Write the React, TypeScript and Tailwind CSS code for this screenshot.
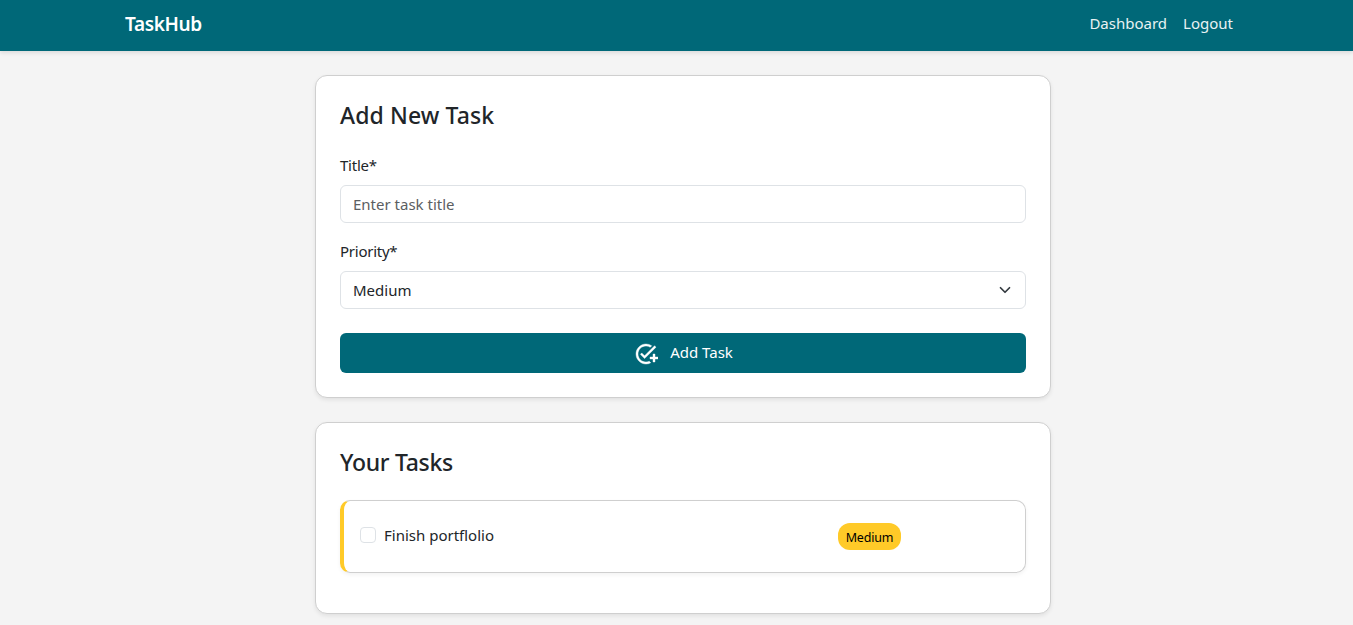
import { useState } from 'react';

function Navbar() {
  return (
    <nav className="flex h-[51px] items-center justify-between bg-[#006878] pr-[120px] pl-[125px] text-white shadow-[0_2px_4px_rgba(0,0,0,0.1)]">
      <a href="#" className="-mt-[3px] text-[19px] leading-7 font-semibold tracking-[-0.35px]">TaskHub</a>
      <div className="-mt-[5px] flex gap-4 text-[15px] leading-6 text-[#e8f2f3]">
        <a href="#">Dashboard</a>
        <a href="#">Logout</a>
      </div>
    </nav>
  );
}

function AddTaskIcon() {
  return (
    <svg viewBox="0 0 24 24" className="mt-0.5 size-6" fill="currentColor" stroke="currentColor" strokeWidth="0.4">
      <path d="M22 5.18 10.59 16.6l-4.24-4.24 1.41-1.41 2.83 2.83 10-10L22 5.18zM12 20c-4.41 0-8-3.59-8-8s3.59-8 8-8c1.57 0 3.04.46 4.28 1.25l1.45-1.45A10.02 10.02 0 0 0 12 2C6.48 2 2 6.48 2 12s4.48 10 10 10c1.73 0 3.36-.44 4.78-1.22l-1.5-1.5c-1 .46-2.11.72-3.28.72zm7-5h-3v2h3v3h2v-3h3v-2h-3v-3h-2v3z" />
    </svg>
  );
}

function AddTaskCard() {
  const [title, setTitle] = useState('');
  return (
    <section className="h-[323px] w-[736px] rounded-[12px] border border-[#cfcfcf] bg-white px-6 pt-[25px] shadow-[0_2px_4px_rgba(0,0,0,0.08)]">
      <h2 className="text-[23px] leading-[29px] font-medium tracking-[0.1px]">Add New Task</h2>
      <label className="mt-[23px] block leading-6 tracking-[-0.25px]">Title*</label>
      <input
        value={title}
        onChange={(e) => setTitle(e.target.value)}
        placeholder="Enter task title"
        className="mt-2 block h-[38px] w-full rounded-md border border-[#dee2e6] px-3 placeholder:text-[#5b5e62]"
      />
      <label className="mt-4 block leading-6 tracking-[-0.25px]">Priority*</label>
      <button className="mt-2 flex h-[38px] w-full items-center justify-between rounded-md border border-[#dee2e6] px-3">
        <span>Medium</span>
        <svg viewBox="0 0 16 16" className="h-3 w-4" fill="none" stroke="#343a40" strokeWidth="2.3" strokeLinecap="round" strokeLinejoin="round">
          <path d="m2 5 6 6 6-6" />
        </svg>
      </button>
      <button className="mt-6 flex h-10 w-full items-center justify-center gap-3 rounded-md bg-[#006878] pl-px text-white">
        <AddTaskIcon />
        <span className="-mt-0.5">Add Task</span>
      </button>
    </section>
  );
}

function TasksCard() {
  return (
    <section className="h-[192px] w-[736px] rounded-[12px] border border-[#cfcfcf] bg-white px-6 pt-[25px] shadow-[0_2px_4px_rgba(0,0,0,0.08)]">
      <h2 className="text-[23px] leading-[29px] font-medium tracking-[-0.3px]">Your Tasks</h2>
      <div className="mt-[23px] flex h-[73px] items-center rounded-[10px] border border-l-4 border-[#cfcfcf] border-l-[#ffca28] pl-4 shadow-[0_2px_4px_rgba(0,0,0,0.05)]">
        <input type="checkbox" className="-mt-[3px] size-4 appearance-none rounded-[4px] border border-[#dee2e6] checked:bg-[#006878]" />
        <span className="-mt-[2px] ml-2 w-[454px]">Finish portflolio</span>
        <span className="flex h-[27px] w-[63px] items-center justify-center rounded-[12px] bg-[#ffca28] pt-[3px] text-[12.5px] tracking-[-0.2px] text-black">Medium</span>
      </div>
    </section>
  );
}

export default function App() {
  return (
    <div className="h-[625px] overflow-hidden bg-[#f4f4f4] font-['Noto_Sans',sans-serif] text-[15px] text-[#212529]">
      <Navbar />
      <main className="mt-6 ml-[315px] flex flex-col gap-6">
        <AddTaskCard />
        <TasksCard />
      </main>
    </div>
  );
}
